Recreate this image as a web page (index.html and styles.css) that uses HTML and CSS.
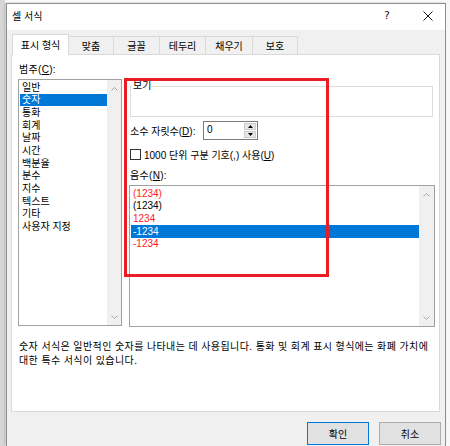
FILE: index.html
```html
<!DOCTYPE html>
<html lang="ko">
<head>
<meta charset="utf-8">
<title>셀 서식</title>
<link rel="stylesheet" href="styles.css">
</head>
<body>
<div class="dialog">
  <div class="titlebar">
    <span class="title">셀 서식</span>
    <span class="help">?</span>
    <svg class="close" width="10" height="10" viewBox="0 0 10 10"><path d="M0.5 0.5L9.5 9.5M9.5 0.5L0.5 9.5" stroke="#1a1a1a" stroke-width="1" fill="none"/></svg>
  </div>
  <div class="content">
    <div class="tabs">
      <div class="tab active t1">표시 형식</div>
      <div class="tab t2">맞춤</div>
      <div class="tab t3">글꼴</div>
      <div class="tab t4">테두리</div>
      <div class="tab t5">채우기</div>
      <div class="tab t6">보호</div>
    </div>
    <div class="panel">
      <div class="columns">
        <div class="left">
          <div class="label">범주(<u>C</u>):</div>
          <div class="listbox cat">
            <ul class="items">
              <li>일반</li>
              <li class="sel">숫자</li>
              <li>통화</li>
              <li>회계</li>
              <li>날짜</li>
              <li>시간</li>
              <li>백분율</li>
              <li>분수</li>
              <li>지수</li>
              <li>텍스트</li>
              <li>기타</li>
              <li>사용자 지정</li>
            </ul>
            <div class="vscroll">
              <svg width="7" height="4" viewBox="0 0 7 4"><path d="M0.5 3.5L3.5 0.5L6.5 3.5" fill="none" stroke="#a6a6a6"/></svg>
              <svg width="7" height="4" viewBox="0 0 7 4"><path d="M0.5 0.5L3.5 3.5L6.5 0.5" fill="none" stroke="#a6a6a6"/></svg>
            </div>
          </div>
        </div>
        <div class="right">
          <div class="preview"><span class="preview-label">보기</span></div>
          <div class="decimals">
            <span class="dec-label">소수 자릿수(<u>D</u>):</span>
            <div class="spin">
              <span class="spin-value">0</span>
              <div class="spin-btns">
                <span><svg width="5" height="3" viewBox="0 0 5 3"><path d="M0 3L2.5 0L5 3Z" fill="#000"/></svg></span>
                <span><svg width="5" height="3" viewBox="0 0 5 3"><path d="M0 0L2.5 3L5 0Z" fill="#000"/></svg></span>
              </div>
            </div>
          </div>
          <div class="check">
            <span class="box"></span>
            <span>1000 단위 구분 기호(,) 사용(<u>U</u>)</span>
          </div>
          <div class="label neg-label">음수(<u>N</u>):</div>
          <div class="listbox neg">
            <ul class="items">
              <li class="red">(1234)</li>
              <li>(1234)</li>
              <li class="red">1234</li>
              <li class="sel">-1234</li>
              <li class="red">-1234</li>
            </ul>
            <div class="vscroll">
              <svg width="7" height="4" viewBox="0 0 7 4"><path d="M0.5 3.5L3.5 0.5L6.5 3.5" fill="none" stroke="#a6a6a6"/></svg>
              <svg width="7" height="4" viewBox="0 0 7 4"><path d="M0.5 0.5L3.5 3.5L6.5 0.5" fill="none" stroke="#a6a6a6"/></svg>
            </div>
          </div>
        </div>
      </div>
      <p class="desc">숫자 서식은 일반적인 숫자를 나타내는 데 사용됩니다. 통화 및 회계 표시 형식에는 화폐 가치에<br>대한 특수 서식이 있습니다.</p>
      <div class="annotation"></div>
    </div>
    <div class="buttons">
      <button class="btn default">확인</button>
      <button class="btn">취소</button>
    </div>
  </div>
</div>
</body>
</html>
```
FILE: styles.css
```css
* { box-sizing: border-box; }

body {
  margin: 0;
  width: 450px;
  height: 446px;
  overflow: hidden;
  font-family: "Liberation Sans", "Noto Sans CJK KR", sans-serif;
  font-size: 10px;
  color: #000;
  background: linear-gradient(to right, #d6d6d6 0, #d6d6d6 5px, #f8f8f8 5px);
}

.dialog {
  margin: 3px 0 0 6px;
  width: 440px;
  height: 443px;
  border: 1px solid #8f8f8f;
  border-bottom: 0;
  background: #f0f0f0;
  display: flex;
  flex-direction: column;
  box-shadow: -1px 0 2px rgba(0, 0, 0, 0.25);
}

.titlebar {
  flex: none;
  height: 26px;
  background: #fff;
  display: flex;
  align-items: center;
  padding: 0 12px 3px 5px;
}

.title { flex: 1; }

.help {
  width: 12px;
  text-align: center;
  font-family: "DejaVu Sans", sans-serif;
  font-size: 11px;
  margin-right: 30px;
  color: #1a1a1a;
}

.close { display: block; }

.content {
  flex: 1;
  display: flex;
  flex-direction: column;
  padding: 0 5px 0 4px;
}

.tabs {
  flex: none;
  height: 24px;
  display: flex;
  align-items: flex-end;
  padding-left: 1px;
}

.tab {
  height: 18px;
  border: 1px solid #d9d9d9;
  border-bottom: 0;
  background: #f0f0f0;
  display: flex;
  align-items: center;
  justify-content: center;
  margin-left: -1px;
  padding-bottom: 1px;
}

.tab.active {
  height: 21px;
  background: #fff;
  margin-left: 0;
  margin-bottom: -1px;
  position: relative;
  z-index: 1;
}

.t1 { width: 57px; }
.t2 { width: 46px; }
.t3 { width: 47px; }
.t4 { width: 47px; }
.t5 { width: 48px; }
.t6 { width: 46px; }

.panel {
  flex: none;
  height: 358px;
  background: #fff;
  border: 1px solid #d9d9d9;
  padding: 8px 4px 0 6px;
  position: relative;
}

.columns {
  display: grid;
  grid-template-columns: 104px 306px;
  column-gap: 7px;
  align-items: start;
}

.label {
  height: 14px;
  line-height: 14px;
  padding-left: 1px;
  letter-spacing: 0.3px;
}

.listbox {
  border: 1px solid #a0a0a0;
  background: #fff;
  display: flex;
  margin-top: 2px;
}

.cat { height: 247px; }
.neg { height: 142px; }

.items {
  list-style: none;
  margin: 0;
  padding: 1px 0 0 1px;
  flex: 1;
}

.items li {
  height: 12.7px;
  line-height: 12.7px;
  padding: 0.5px 0 0 2px;
  white-space: nowrap;
}

.items li.red { color: #ff1a1a; }

.items li.sel {
  background: #0078d7;
  color: #fff;
}

.vscroll {
  width: 14px;
  background: #f0f0f0;
  display: flex;
  flex-direction: column;
  justify-content: space-between;
  align-items: center;
  padding: 7px 0 6px;
}

.neg .vscroll { width: 15px; }
.vscroll svg { display: block; }

.preview {
  margin: 23px 2px 0 1px;
  height: 31px;
  border: 1px solid #dcdcdc;
  position: relative;
}

.preview-label {
  position: absolute;
  left: 1px;
  top: -8px;
  padding: 0 1px;
  line-height: 14px;
  background: #fff;
}

.decimals {
  margin-top: 4px;
  height: 19px;
  display: flex;
  align-items: center;
  padding-left: 1px;
}

.dec-label { width: 73px; white-space: nowrap; }

.spin {
  width: 55px;
  height: 19px;
  border: 1px solid #7a7a7a;
  background: #fff;
  display: flex;
}

.spin-value {
  flex: 1;
  padding-left: 3px;
  line-height: 16px;
}

.spin-btns {
  width: 13px;
  display: flex;
  flex-direction: column;
  padding: 1px 1px 1px 0;
  gap: 1px;
}

.spin-btns span {
  flex: 1;
  background: #e6e6e6;
  border: 1px solid #cccccc;
  display: flex;
  align-items: center;
  justify-content: center;
}

.spin-btns svg { display: block; }

.check {
  margin-top: 7px;
  height: 14px;
  display: flex;
  align-items: center;
  gap: 3px;
  padding-left: 1px;
  white-space: nowrap;
}

.box {
  width: 11px;
  height: 11px;
  border: 1px solid #333;
  background: #fff;
}

.neg-label { margin-top: 8px; }

.desc {
  margin: 13px 0 0 1px;
  line-height: 14px;
  white-space: nowrap;
  letter-spacing: 0.4px;
}

.annotation {
  position: absolute;
  left: 112px;
  top: 23px;
  width: 205px;
  height: 199px;
  border: 3px solid #ea1c24;
  pointer-events: none;
}

.buttons {
  flex: none;
  display: flex;
  justify-content: flex-end;
  gap: 10px;
  margin: 10px -1px 0 0;
}

.btn {
  width: 62px;
  height: 23px;
  padding: 0;
  border: 1px solid #adadad;
  background: #e1e1e1;
  font: inherit;
  color: #000;
}

.btn.default { border-color: #0078d7; }
```
